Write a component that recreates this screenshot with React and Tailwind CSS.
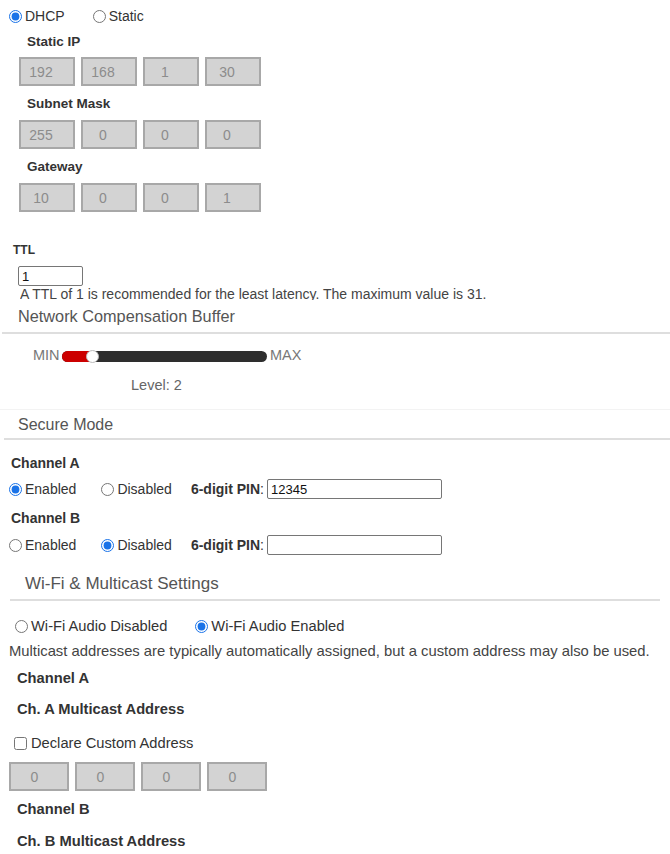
import React from 'react';

// ── Small pieces ──────────────────────────────────────────

const Radio = ({ checked, name, className = '' }) => (
  <input
    type="radio"
    name={name}
    defaultChecked={checked}
    className={`m-0 h-[13px] w-[13px] shrink-0 accent-[#1a73e8] ${className}`}
  />
);

const OctetRow = ({ values, width = 'w-[56px]', pad = 'pr-[12px]', className = '' }) => (
  <div className={`flex gap-[6px] ${className}`}>
    {values.map((v, i) => (
      <input
        key={i}
        readOnly
        value={v}
        className={`h-[29px] ${width} ${pad} border-2 border-[#a8a8a8] bg-[#d3d3d3] text-center text-[14px] text-[#8c8c8c] outline-none`}
      />
    ))}
  </div>
);

const SectionHeader = ({ title, size = 'text-[16px]', className = '' }) => (
  <div className={`border-b-2 border-[#dedede] ${className}`}>
    <p className={`${size} leading-[18px] text-[#555]`}>{title}</p>
  </div>
);

const Label = ({ children, size = 'text-[13.5px]', className = '' }) => (
  <p className={`${size} font-bold leading-[16px] text-[#333] ${className}`}>{children}</p>
);

const PinRow = ({ name, enabled, pin }) => (
  <div className="flex h-[20px] items-center text-[14px] text-[#333]">
    <Radio name={name} checked={enabled} className="ml-[9px]" />
    <span className="ml-[3px]">Enabled</span>
    <Radio name={name} checked={!enabled} className="ml-[25px]" />
    <span className="ml-[3px]">Disabled</span>
    <span className="ml-[19px] font-bold">6-digit PIN</span>
    <span>:</span>
    <input
      readOnly
      value={pin}
      className="ml-[3px] h-[20px] w-[175px] rounded-[2px] border border-[#767676] px-[3px] text-[13px] text-[#111] outline-none"
    />
  </div>
);

// ── Page ──────────────────────────────────────────────────

export default function App() {
  return (
    <div className="relative h-[854px] w-[670px] overflow-hidden bg-white text-[#333]" style={{ fontFamily: '"Liberation Sans", Arial, sans-serif' }}>
      {/* Addressing */}
      <div className="mt-[8px] flex h-[16px] items-center text-[14px]">
        <Radio name="addr" checked className="ml-[9px]" />
        <span className="ml-[3px]">DHCP</span>
        <Radio name="addr" className="ml-[28px]" />
        <span className="ml-[3px]">Static</span>
      </div>

      <Label className="ml-[27px] mt-[10px]">Static IP</Label>
      <OctetRow values={['192', '168', '1', '30']} className="ml-[19px] mt-[7px]" />

      <Label className="ml-[27px] mt-[10px]">Subnet Mask</Label>
      <OctetRow values={['255', '0', '0', '0']} className="ml-[19px] mt-[8px]" />

      <Label className="ml-[27px] mt-[10px]">Gateway</Label>
      <OctetRow values={['10', '0', '0', '1']} className="ml-[19px] mt-[8px]" />

      {/* TTL */}
      <p className="ml-[13px] mt-[31px] h-[14px] text-[12px] font-bold leading-[14px]">TTL</p>
      <input
        readOnly
        value="1"
        className="ml-[18px] mt-[9px] block h-[20px] w-[65px] rounded-[2px] border border-[#767676] px-[3px] text-[13px] text-[#111] outline-none"
      />
      <p className="ml-[20px] h-[14px] overflow-hidden whitespace-nowrap text-[14px] leading-[16px] text-[#444]">
        A TTL of 1 is recommended for the least latency. The maximum value is 31.
      </p>

      {/* Network Compensation Buffer */}
      <SectionHeader title="Network Compensation Buffer" size="text-[16.3px]" className="ml-[2px] pb-[7px] pl-[16px] pt-[7px]" />
      <div className="mt-[16px] flex h-[12px] items-center text-[14.5px] text-[#777]">
        <span className="ml-[33px] w-[29px]">MIN</span>
        <div className="relative h-[11px] w-[205px] rounded-full bg-[#2e2e2e]">
          <div className="h-full w-[31px] rounded-l-full bg-[#cc0000]" />
          <div className="absolute left-[24px] top-[-1px] h-[13px] w-[13px] rounded-full border border-[#bbb] bg-white" />
        </div>
        <span className="ml-[3px]">MAX</span>
      </div>
      <p className="ml-[131px] mt-[15px] text-[14.5px] leading-[16px] text-[#666]">Level: 2</p>

      {/* Secure Mode */}
      <div className="mt-[16px] border-t border-[#f3f3f3]">
        <SectionHeader title="Secure Mode" className="ml-[4px] pb-[4px] pl-[14px] pt-[6px]" />
      </div>
      <Label size="text-[14px]" className="ml-[11px] mt-[15px]">Channel A</Label>
      <div className="mt-[8px]">
        <PinRow name="secA" enabled pin="12345" />
      </div>
      <Label size="text-[14px]" className="ml-[11px] mt-[11px]">Channel B</Label>
      <div className="mt-[9px]">
        <PinRow name="secB" enabled={false} pin="" />
      </div>

      {/* Wi-Fi & Multicast */}
      <SectionHeader title="Wi-Fi & Multicast Settings" size="text-[17px]" className="ml-[10px] mr-[10px] mt-[20px] pb-[6px] pl-[15px]" />
      <div className="mt-[17px] flex h-[16px] items-center text-[14.7px]">
        <Radio name="wifi" className="ml-[15px]" />
        <span className="ml-[3px]">Wi-Fi Audio Disabled</span>
        <Radio name="wifi" checked className="ml-[28px]" />
        <span className="ml-[3px]">Wi-Fi Audio Enabled</span>
      </div>
      <p className="ml-[9px] mt-[9px] whitespace-nowrap text-[14.8px] leading-[17px] text-[#444]">
        Multicast addresses are typically automatically assigned, but a custom address may also be used.
      </p>
      <Label size="text-[14.7px]" className="ml-[17px] mt-[10px]">Channel A</Label>
      <Label size="text-[14.7px]" className="ml-[17px] mt-[15px]">Ch. A Multicast Address</Label>
      <div className="mt-[18px] flex h-[16px] items-center text-[14.7px]">
        <input type="checkbox" className="m-0 ml-[14px] h-[13px] w-[13px] accent-[#1a73e8]" />
        <span className="ml-[4px]">Declare Custom Address</span>
      </div>
      <OctetRow values={['0', '0', '0', '0']} width="w-[60px]" pad="pr-[9px]" className="ml-[9px] mt-[11px]" />
      <Label size="text-[14.7px]" className="ml-[17px] mt-[10px]">Channel B</Label>
      <Label size="text-[14.7px]" className="ml-[17px] mt-[16px]">Ch. B Multicast Address</Label>
    </div>
  );
}
